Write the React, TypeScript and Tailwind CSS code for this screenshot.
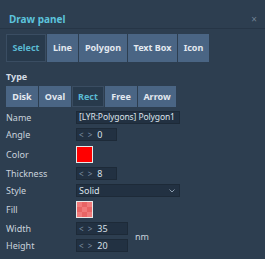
import React, { useState } from 'react';

const tabs = [
  { label: 'Select', w: 'w-[40px]' },
  { label: 'Line', w: 'w-[31px]' },
  { label: 'Polygon', w: 'w-[48px]' },
  { label: 'Text Box', w: 'w-[49px]' },
  { label: 'Icon', w: 'w-[31px]' },
];

const shapes = [
  { label: 'Disk', w: 'w-[32px]' },
  { label: 'Oval', w: 'w-[32px]' },
  { label: 'Rect', w: 'w-[32px]' },
  { label: 'Free', w: 'w-[32px]' },
  { label: 'Arrow', w: 'w-[38px]' },
];

function Arrows() {
  return <span className="text-[#7f90a4] text-[8px] mr-[5px] whitespace-pre">{'<  >'}</span>;
}

function NumberBox({ value, w }: { value: string; w: string }) {
  return (
    <div className={`${w} h-[13px] bg-[#223142] border border-[#1d2a38] flex items-center pl-[2px] text-[9px] text-[#d9e0e8]`}>
      <Arrows />
      {value}
    </div>
  );
}

function Label({ children }: { children: React.ReactNode }) {
  return <div className="w-[70px] text-[9px] text-[#c9d2dc]">{children}</div>;
}

export default function App() {
  const [tab, setTab] = useState('Select');
  const [shape, setShape] = useState('Rect');

  return (
    <div className="w-[265px] h-[259px] bg-[#2d3e50] overflow-hidden" style={{ fontFamily: '"Noto Sans", sans-serif' }}>
      {/* header */}
      <div className="h-[29px] pt-[10px] px-[9px] flex items-center justify-between border-b border-[#263546]">
        <span className="text-[10px] font-bold text-[#5cc3dc]">Draw panel</span>
        <span className="text-[10px] text-[#6f8092] mr-[-1px]">×</span>
      </div>

      {/* tabs */}
      <div className="flex gap-[1px] pl-[6px] mt-[5px]">
        {tabs.map((t) => (
          <button
            key={t.label}
            onClick={() => setTab(t.label)}
            className={`${t.w} h-[28px] text-[9px] font-bold flex items-center justify-center whitespace-nowrap ${
              tab === t.label
                ? 'bg-[#283a4c] text-[#5ab9d2] border border-[#3a4d62]'
                : 'bg-[#4a6584] text-[#e3e9f0]'
            }`}
          >
            {t.label}
          </button>
        ))}
      </div>

      {/* type */}
      <div className="pl-[6px] mt-[9px] text-[9px] font-bold text-[#d3dbe4] leading-[12px]">Type</div>
      <div className="flex gap-[1px] pl-[6px] mt-[3px]">
        {shapes.map((s) => (
          <button
            key={s.label}
            onClick={() => setShape(s.label)}
            className={`${s.w} h-[21px] text-[9px] font-bold flex items-center justify-center ${
              shape === s.label
                ? 'bg-[#283a4c] text-[#5ab9d2] border border-[#3a4d62]'
                : 'bg-[#4a6584] text-[#e3e9f0]'
            }`}
          >
            {s.label}
          </button>
        ))}
      </div>

      {/* form */}
      <div className="pl-[6px] mt-[4px] flex flex-col">
        <div className="flex items-center h-[13px]">
          <Label>Name</Label>
          <div className="w-[104px] h-[13px] bg-[#223142] border border-[#1d2a38] flex items-center pl-[2px] text-[8.5px] tracking-[-0.1px] text-[#dde3ea] whitespace-nowrap overflow-hidden">
            [LYR:Polygons] Polygon1
          </div>
        </div>

        <div className="flex items-center h-[13px] mt-[4px]">
          <Label>Angle</Label>
          <NumberBox value="0" w="w-[41px]" />
        </div>

        <div className="flex items-center h-[17px] mt-[5px]">
          <Label>Color</Label>
          <div className="w-[17px] h-[17px] border border-[#e8e8e8] bg-[#ff0000]" />
        </div>

        <div className="flex items-center h-[13px] mt-[4px]">
          <Label>Thickness</Label>
          <NumberBox value="8" w="w-[41px]" />
        </div>

        <div className="flex items-center h-[13px] mt-[4px]">
          <Label>Style</Label>
          <div className="w-[104px] h-[13px] bg-[#223142] border border-[#1d2a38] flex items-center justify-between pl-[2px] pr-[4px] text-[9px] text-[#dde3ea]">
            <span>Solid</span>
            <svg width="6" height="4" viewBox="0 0 6 4">
              <path d="M0.5 0.5 L3 3 L5.5 0.5" stroke="#8a9aac" strokeWidth="1" fill="none" />
            </svg>
          </div>
        </div>

        <div className="flex items-center h-[17px] mt-[4px]">
          <Label>Fill</Label>
          <div className="w-[17px] h-[17px] border border-[#e8e8e8] grid grid-cols-3 grid-rows-3">
            <div className="bg-[#f07a7a]" />
            <div className="bg-[#e86464]" />
            <div className="bg-[#f07a7a]" />
            <div className="bg-[#e86464]" />
            <div className="bg-[#f07a7a]" />
            <div className="bg-[#e86464]" />
            <div className="bg-[#f07a7a]" />
            <div className="bg-[#e86464]" />
            <div className="bg-[#f07a7a]" />
          </div>
        </div>

        <div className="flex items-center mt-[4px]">
          <div className="flex flex-col gap-[4px]">
            <div className="flex items-center h-[13px]">
              <Label>Width</Label>
              <NumberBox value="35" w="w-[52px]" />
            </div>
            <div className="flex items-center h-[13px]">
              <Label>Height</Label>
              <NumberBox value="20" w="w-[52px]" />
            </div>
          </div>
          <span className="ml-[7px] text-[9px] text-[#c9d2dc]">nm</span>
        </div>
      </div>
    </div>
  );
}
